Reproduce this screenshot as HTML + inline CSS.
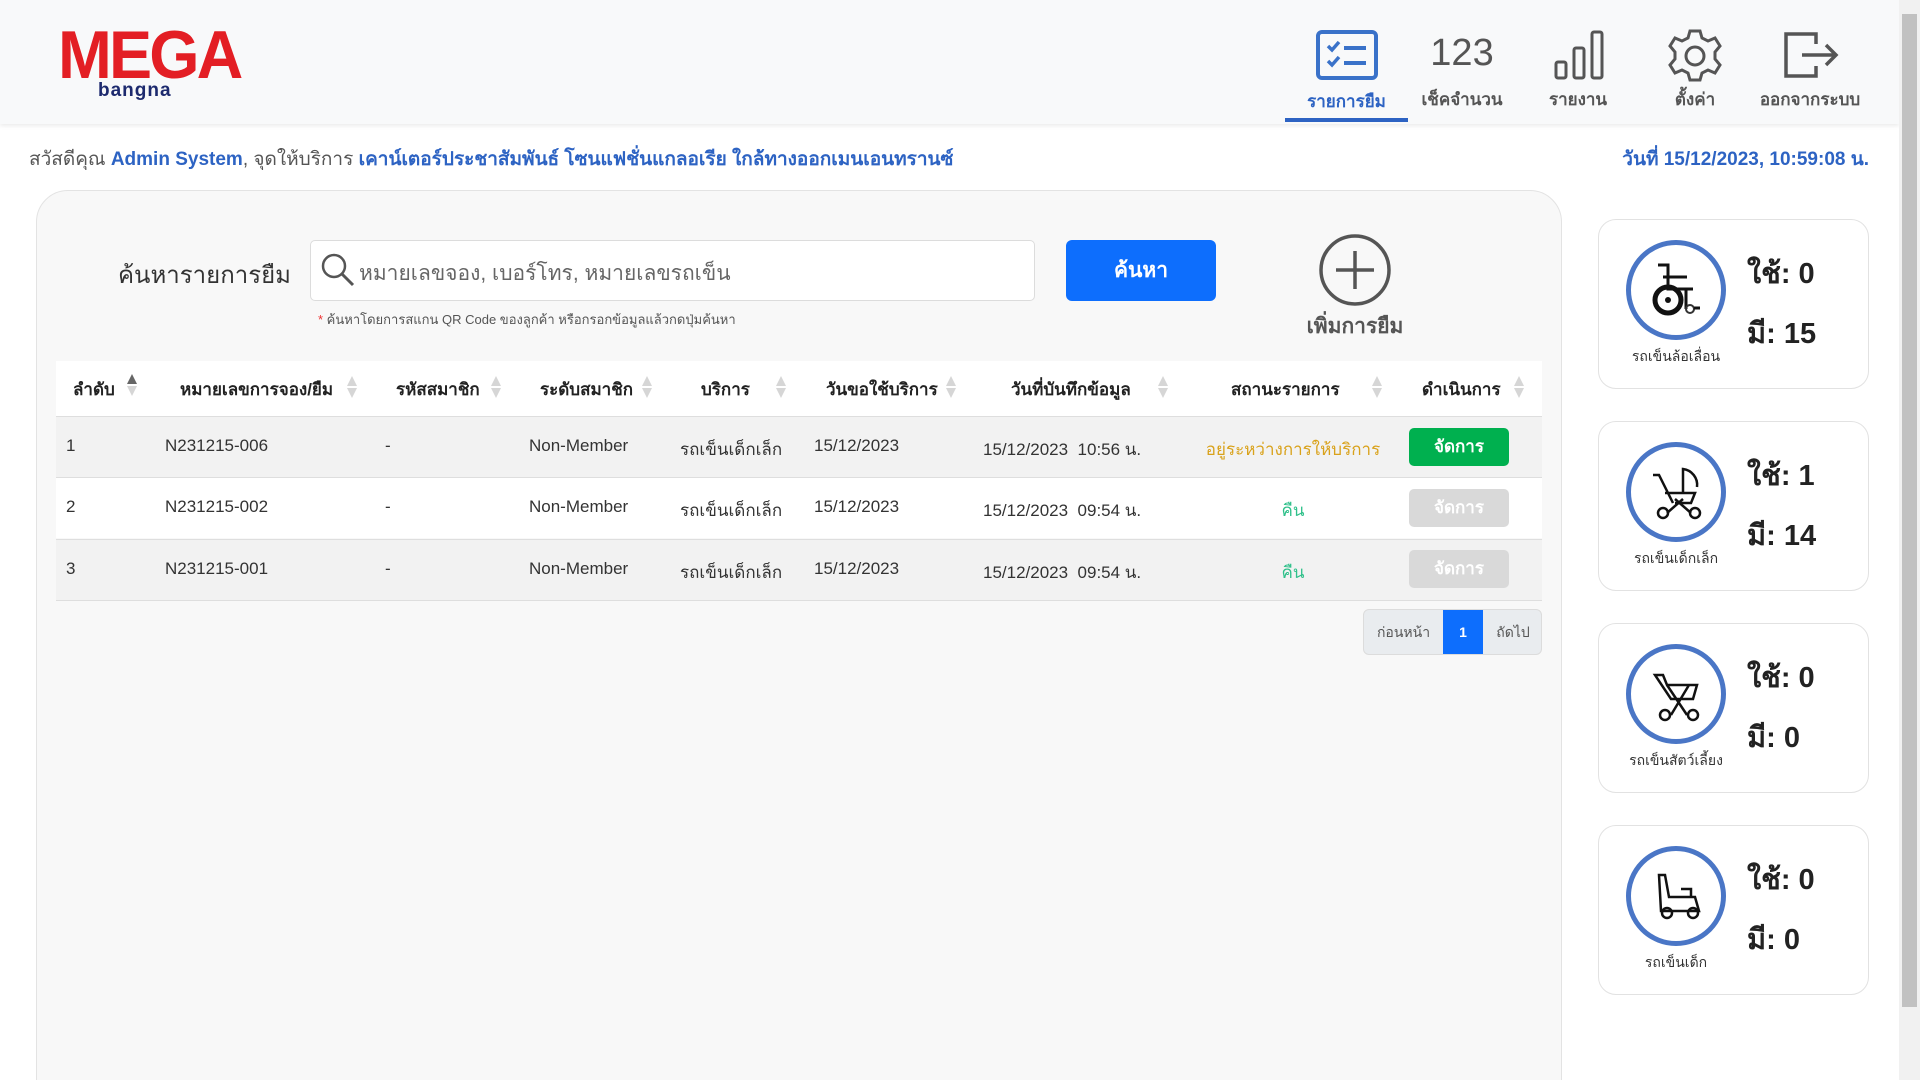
<!DOCTYPE html>
<html><head><meta charset="utf-8"><style>
*{margin:0;padding:0;box-sizing:border-box}
html,body{width:1920px;height:1080px;overflow:hidden}
body{background:#fff;font-family:"Liberation Sans","Noto Sans CJK SC",sans-serif;color:#333}
#w{position:relative;width:1920px;height:1080px;overflow:hidden}
.a{position:absolute}
.hdr{left:0;top:0;width:1899px;height:124px;background:#f8f9fa;box-shadow:0 2px 4px rgba(0,0,0,.08)}
.nav{text-align:center;font-size:17px;color:#555;font-weight:bold}
.panel{left:36px;top:190px;width:1526px;height:940px;background:#f8f8f8;border:1px solid #e3e3e3;border-radius:32px}
.th{font-size:17px;font-weight:bold;color:#222;top:376px}
.row{left:56px;width:1486px;height:61px;border-top:1px solid #dedede}
.td{font-size:17px;color:#333}
.card{left:1598px;width:271px;height:170px;border:1px solid #e2e2e2;border-radius:18px;background:#fff}
.circ{left:27px;top:20px;width:100px;height:100px;border:5px solid #4a76c6;border-radius:50%}
.clab{left:0;width:154px;text-align:center;top:126px;font-size:14px;color:#333}
.cv{left:148px;font-size:29px;font-weight:bold;color:#222}
.btn{width:100px;height:38px;border-radius:5px;color:#fff;font-size:17px;font-weight:bold;text-align:center;line-height:38px}
.sort{width:12px;height:22px}
</style></head><body><div id="w">
<div class="a hdr"></div>
<div class="a" style="left:58px;top:16px;font-size:68px;font-weight:bold;color:#e31e24;letter-spacing:-3px;transform:scaleX(0.95);transform-origin:left">MEGA</div>
<div class="a" style="left:98px;top:80px;font-size:19px;color:#1d2a6e;font-weight:bold;letter-spacing:1px">bangna</div>

<svg class="a" style="left:1316px;top:30px" width="62" height="50" viewBox="0 0 62 50"><rect x="2" y="2" width="58" height="46" rx="4" fill="none" stroke="#3a72c9" stroke-width="4"/><path d="M12 16l4 4 7-8M12 31l4 4 7-8" fill="none" stroke="#3a72c9" stroke-width="3.5"/><path d="M28 18h22M28 33h22" stroke="#3a72c9" stroke-width="4"/></svg>
<div class="a nav" style="left:1285px;top:88px;width:123px;color:#2d63c3">รายการยืม</div>
<div class="a" style="left:1285px;top:118px;width:123px;height:4px;background:#2d63c3"></div>
<div class="a" style="left:1412px;top:32px;width:100px;text-align:center;font-size:38px;color:#555">123</div>
<div class="a nav" style="left:1412px;top:86px;width:100px">เช็คจำนวน</div>
<svg class="a" style="left:1553px;top:30px" width="52" height="50" viewBox="0 0 52 50"><rect x="3" y="32" width="10" height="16" rx="2" fill="none" stroke="#555" stroke-width="3"/><rect x="21" y="18" width="10" height="30" rx="2" fill="none" stroke="#555" stroke-width="3"/><rect x="39" y="2" width="10" height="46" rx="2" fill="none" stroke="#555" stroke-width="3"/></svg>
<div class="a nav" style="left:1528px;top:86px;width:100px">รายงาน</div>
<svg class="a" style="left:1666px;top:28px" width="58" height="56" viewBox="0 0 58 56"><path d="M24 3h10l2 7 6 3 7-3 5 8-5 6v7l5 6-5 8-7-3-6 3-2 7H24l-2-7-6-3-7 3-5-8 5-6v-7l-5-6 5-8 7 3 6-3z" fill="none" stroke="#555" stroke-width="3"/><circle cx="29" cy="28" r="9" fill="none" stroke="#555" stroke-width="3"/></svg>
<div class="a nav" style="left:1645px;top:86px;width:100px">ตั้งค่า</div>
<svg class="a" style="left:1782px;top:30px" width="58" height="50" viewBox="0 0 58 50"><path d="M34 14V4H4v42h30V36" fill="none" stroke="#555" stroke-width="3.5"/><path d="M20 25h34M44 15l10 10-10 10" fill="none" stroke="#555" stroke-width="3.5"/></svg>
<div class="a nav" style="left:1750px;top:86px;width:120px">ออกจากระบบ</div>

<div class="a" style="left:29px;top:144px;font-size:19px;color:#555">สวัสดีคุณ <b style="color:#2d63c3">Admin System</b>, จุดให้บริการ <b style="color:#2d63c3">เคาน์เตอร์ประชาสัมพันธ์ โซนแฟชั่นแกลอเรีย ใกล้ทางออกเมนเอนทรานซ์</b></div>
<div class="a" style="right:51px;top:144px;font-size:19px;color:#2d63c3;font-weight:bold">วันที่ 15/12/2023, 10:59:08 น.</div>

<div class="a panel"></div>
<div class="a" style="left:118px;top:255px;font-size:24px;color:#333">ค้นหารายการยืม</div>
<div class="a" style="left:310px;top:240px;width:725px;height:61px;background:#fff;border:1px solid #dcdcdc;border-radius:5px"></div>
<svg class="a" style="left:320px;top:252px" width="36" height="36" viewBox="0 0 36 36"><circle cx="14" cy="14" r="11" fill="none" stroke="#555" stroke-width="2.5"/><path d="M22 22l11 11" stroke="#555" stroke-width="3"/></svg>
<div class="a" style="left:359px;top:257px;font-size:21px;color:#666">หมายเลขจอง, เบอร์โทร, หมายเลขรถเข็น</div>
<div class="a" style="left:318px;top:309px;font-size:13px;color:#555"><span style="color:#e33">*</span> ค้นหาโดยการสแกน QR Code ของลูกค้า หรือกรอกข้อมูลแล้วกดปุ่มค้นหา</div>
<div class="a" style="left:1066px;top:240px;width:150px;height:61px;background:#0d6efd;border-radius:6px;color:#fff;font-size:21px;font-weight:bold;text-align:center;line-height:61px">ค้นหา</div>
<svg class="a" style="left:1318px;top:233px" width="74" height="74" viewBox="0 0 74 74"><circle cx="37" cy="37" r="34" fill="none" stroke="#555" stroke-width="3.5"/><path d="M37 18v38M18 37h38" stroke="#555" stroke-width="3.5"/></svg>
<div class="a" style="left:1300px;top:310px;width:110px;text-align:center;font-size:21px;font-weight:bold;color:#555">เพิ่มการยืม</div>

<div class="a" style="left:56px;top:361px;width:1486px;height:55px;background:#fff"></div>
<div class="a th" style="left:73px">ลำดับ</div>
<div class="a th" style="left:180px">หมายเลขการจอง/ยืม</div>
<div class="a th" style="left:396px">รหัสสมาชิก</div>
<div class="a th" style="left:540px">ระดับสมาชิก</div>
<div class="a th" style="left:701px">บริการ</div>
<div class="a th" style="left:826px">วันขอใช้บริการ</div>
<div class="a th" style="left:1011px">วันที่บันทึกข้อมูล</div>
<div class="a th" style="left:1231px">สถานะรายการ</div>
<div class="a th" style="left:1422px">ดำเนินการ</div>
<svg width="0" height="0" style="position:absolute"><defs><g id="s"><path d="M6 0l5 10H1z" fill="#d6d6d6"/><path d="M6 22l5-10H1z" fill="#d6d6d6"/></g></defs></svg>
<svg class="a sort" style="left:126px;top:374px"><path d="M6 0l5 10H1z" fill="#666"/><path d="M6 22l5-10H1z" fill="#d6d6d6"/></svg>
<svg class="a sort" style="left:346px;top:376px"><use href="#s"/></svg>
<svg class="a sort" style="left:490px;top:376px"><use href="#s"/></svg>
<svg class="a sort" style="left:641px;top:376px"><use href="#s"/></svg>
<svg class="a sort" style="left:775px;top:376px"><use href="#s"/></svg>
<svg class="a sort" style="left:945px;top:376px"><use href="#s"/></svg>
<svg class="a sort" style="left:1157px;top:376px"><use href="#s"/></svg>
<svg class="a sort" style="left:1371px;top:376px"><use href="#s"/></svg>
<svg class="a sort" style="left:1513px;top:376px"><use href="#s"/></svg>

<div class="a row" style="top:416px;background:#f2f2f2"></div>
<div class="a row" style="top:477px;background:#fff"></div>
<div class="a row" style="top:539px;background:#f2f2f2;border-bottom:1px solid #dedede;height:62px"></div>

<div class="a td" style="left:66px;top:436px">1</div><div class="a td" style="left:165px;top:436px">N231215-006</div><div class="a td" style="left:385px;top:436px">-</div><div class="a td" style="left:529px;top:436px">Non-Member</div><div class="a td" style="left:680px;top:436px">รถเข็นเด็กเล็ก</div><div class="a td" style="left:814px;top:436px">15/12/2023</div><div class="a td" style="left:983px;top:436px">15/12/2023&nbsp;&nbsp;10:56 น.</div>
<div class="a td" style="left:1150px;width:286px;text-align:center;top:436px;color:#d9a21b">อยู่ระหว่างการให้บริการ</div>
<div class="a btn" style="left:1409px;top:428px;background:#00b04f">จัดการ</div>

<div class="a td" style="left:66px;top:497px">2</div><div class="a td" style="left:165px;top:497px">N231215-002</div><div class="a td" style="left:385px;top:497px">-</div><div class="a td" style="left:529px;top:497px">Non-Member</div><div class="a td" style="left:680px;top:497px">รถเข็นเด็กเล็ก</div><div class="a td" style="left:814px;top:497px">15/12/2023</div><div class="a td" style="left:983px;top:497px">15/12/2023&nbsp;&nbsp;09:54 น.</div>
<div class="a td" style="left:1150px;width:286px;text-align:center;top:497px;color:#2fc08a">คืน</div>
<div class="a btn" style="left:1409px;top:489px;background:#d9d9d9">จัดการ</div>

<div class="a td" style="left:66px;top:559px">3</div><div class="a td" style="left:165px;top:559px">N231215-001</div><div class="a td" style="left:385px;top:559px">-</div><div class="a td" style="left:529px;top:559px">Non-Member</div><div class="a td" style="left:680px;top:559px">รถเข็นเด็กเล็ก</div><div class="a td" style="left:814px;top:559px">15/12/2023</div><div class="a td" style="left:983px;top:559px">15/12/2023&nbsp;&nbsp;09:54 น.</div>
<div class="a td" style="left:1150px;width:286px;text-align:center;top:559px;color:#2fc08a">คืน</div>
<div class="a btn" style="left:1409px;top:550px;background:#d9d9d9">จัดการ</div>

<div class="a" style="left:1363px;top:609px;width:179px;height:46px;border:1px solid #dcdcdc;border-radius:6px;background:#e9ecef;overflow:hidden;font-size:14px;color:#555">
<div class="a" style="left:0;width:79px;top:0;line-height:44px;text-align:center">ก่อนหน้า</div>
<div class="a" style="left:79px;width:40px;top:-1px;height:46px;background:#0d6efd;color:#fff;line-height:46px;text-align:center;font-weight:bold">1</div>
<div class="a" style="left:119px;width:60px;top:0;line-height:44px;text-align:center">ถัดไป</div></div>

<div class="a card" style="top:219px"><div class="a circ"><svg width="90" height="90" viewBox="0 0 90 90"><path d="M27 20h10v24h18v20M32 32h24M40 44h22" fill="none" stroke="#111" stroke-width="3"/><circle cx="37" cy="55" r="13" fill="none" stroke="#111" stroke-width="5"/><circle cx="37" cy="55" r="3" fill="#111"/><circle cx="59" cy="64" r="4" fill="none" stroke="#333" stroke-width="2"/><path d="M63 63h6" stroke="#111" stroke-width="3"/></svg></div><div class="a clab">รถเข็นล้อเลื่อน</div><div class="a cv" style="top:30px">ใช้: 0</div><div class="a cv" style="top:90px">มี: 15</div></div>
<div class="a card" style="top:421px"><div class="a circ"><svg width="90" height="90" viewBox="0 0 90 90"><path d="M22 28h6l14 28M34 46h30l-4 10H44M52 46V22a16 16 0 0 1 14 18" fill="none" stroke="#111" stroke-width="2.5"/><path d="M36 66l16-14M60 66L44 52" stroke="#111" stroke-width="2.5"/><circle cx="32" cy="66" r="5" fill="none" stroke="#111" stroke-width="2.5"/><circle cx="64" cy="66" r="5" fill="none" stroke="#111" stroke-width="2.5"/></svg></div><div class="a clab">รถเข็นเด็กเล็ก</div><div class="a cv" style="top:30px">ใช้: 1</div><div class="a cv" style="top:90px">มี: 14</div></div>
<div class="a card" style="top:623px"><div class="a circ"><svg width="90" height="90" viewBox="0 0 90 90"><path d="M24 26h8l4 10h30l-4 14H40zM36 36l20 30M58 36L40 66" fill="none" stroke="#111" stroke-width="2.5"/><circle cx="34" cy="66" r="5" fill="none" stroke="#111" stroke-width="2.5"/><circle cx="62" cy="66" r="5" fill="none" stroke="#111" stroke-width="2.5"/></svg></div><div class="a clab">รถเข็นสัตว์เลี้ยง</div><div class="a cv" style="top:30px">ใช้: 0</div><div class="a cv" style="top:90px">มี: 0</div></div>
<div class="a card" style="top:825px"><div class="a circ"><svg width="90" height="90" viewBox="0 0 90 90"><path d="M28 24h6l4 22h26l4 14H30zM50 38h10v8" fill="none" stroke="#111" stroke-width="2.5"/><circle cx="36" cy="62" r="5" fill="none" stroke="#111" stroke-width="2.5"/><circle cx="62" cy="62" r="5" fill="none" stroke="#111" stroke-width="2.5"/></svg></div><div class="a clab">รถเข็นเด็ก</div><div class="a cv" style="top:30px">ใช้: 0</div><div class="a cv" style="top:90px">มี: 0</div></div>

<div class="a" style="left:1899px;top:0;width:21px;height:1080px;background:#f1f1f1"></div>
<div class="a" style="left:1902px;top:14px;width:15px;height:993px;background:#c1c1c1"></div>
</div></body></html>
